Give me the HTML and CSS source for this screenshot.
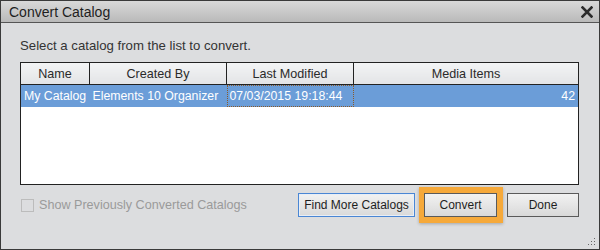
FILE: index.html
```html
<!DOCTYPE html>
<html lang="en">
<head>
    <meta charset="UTF-8">
    <title>Convert Catalog</title>
    <link rel="stylesheet" href="styles.css">
</head>
<body>
    <div class="window">
        <div class="title-bar">
            <span class="title">Convert Catalog</span>
            <span class="close-btn">
                <svg width="12" height="12" viewBox="0 0 12 12">
                    <path d="M1.5 1.5 L10.5 10.5 M10.5 1.5 L1.5 10.5" stroke="#2b2b2b" stroke-width="2.6" stroke-linecap="square"/>
                </svg>
            </span>
        </div>

        <div class="content">
            <p class="hint">Select a catalog from the list to convert.</p>

            <div class="catalog-list">
                <table>
                    <thead>
                        <tr>
                            <th class="col-name">Name</th>
                            <th class="col-created">Created By</th>
                            <th class="col-modified">Last Modified</th>
                            <th class="col-items">Media Items</th>
                        </tr>
                    </thead>
                    <tbody>
                        <tr class="selected">
                            <td>My Catalog</td>
                            <td>Elements 10 Organizer</td>
                            <td class="focused">07/03/2015 19:18:44</td>
                            <td class="num">42</td>
                        </tr>
                    </tbody>
                </table>
            </div>

            <div class="footer">
                <label class="check disabled">
                    <span class="check-box"></span>
                    Show Previously Converted Catalogs
                </label>
                <div class="buttons">
                    <button class="btn btn-focus">Find More Catalogs</button>
                    <span class="highlight"><button class="btn btn-convert">Convert</button></span>
                    <button class="btn btn-done">Done</button>
                </div>
            </div>
        </div>

        <span class="grip">
            <svg width="8" height="8" viewBox="0 0 8 8">
                <rect x="6" y="0" width="1" height="1" fill="#666"/>
                <rect x="3" y="3" width="1" height="1" fill="#666"/>
                <rect x="6" y="3" width="1" height="1" fill="#666"/>
                <rect x="0" y="6" width="1" height="1" fill="#666"/>
                <rect x="3" y="6" width="1" height="1" fill="#666"/>
                <rect x="6" y="6" width="1" height="1" fill="#666"/>
            </svg>
        </span>
    </div>
</body>
</html>
```

FILE: styles.css
```css
body {
    margin: 0;
    padding: 0;
    font-family: "Liberation Sans", Arial, sans-serif;
    font-size: 12.6px;
    color: #2a2a2a;
}

.window {
    position: relative;
    width: 600px;
    height: 250px;
    box-sizing: border-box;
    border: 1px solid #3a3a3a;
    background-color: #dcdddf;
    display: flex;
    flex-direction: column;
}

.title-bar {
    height: 21px;
    border-bottom: 1px solid #555;
    background: linear-gradient(#d9d9d9, #b9b9b9);
    display: flex;
    align-items: center;
    justify-content: space-between;
    padding: 0 6px 0 8px;
}

.title {
    font-size: 14px;
    color: #1e1e1e;
}

.close-btn {
    display: flex;
}

.content {
    padding: 16px 20px 0 19px;
    display: flex;
    flex-direction: column;
}

.hint {
    margin: 0 0 9px 0;
    font-size: 13.2px;
    line-height: 14px;
    color: #333;
}

.catalog-list {
    height: 121px;
    border: 1px solid #222;
    background-color: #fff;
}

table {
    width: 100%;
    border-collapse: collapse;
    table-layout: fixed;
}

th {
    height: 21px;
    padding: 0;
    font-weight: normal;
    color: #2a2a2a;
    background: linear-gradient(#f3f4f5, #e3e4e6);
    border-right: 1px solid #222;
    border-bottom: 1px solid #222;
}

th:last-child {
    border-right: none;
}

.col-name { width: 68px; }
.col-created { width: 136px; }
.col-modified { width: 126px; }

td {
    height: 22px;
    padding: 0 3px;
    font-size: 12.3px;
    white-space: nowrap;
    overflow: hidden;
    box-sizing: border-box;
}

.selected td {
    background-color: #6b9dd8;
    color: #fff;
}

td.focused {
    outline: 1px dotted #8a5a2a;
    outline-offset: -1px;
}

td.num {
    text-align: right;
}

.footer {
    display: flex;
    align-items: center;
    justify-content: space-between;
    margin-top: 2px;
}

.check {
    display: flex;
    align-items: center;
    gap: 5px;
    margin-left: 1px;
}

.check.disabled {
    color: #9a9a9a;
}

.check-box {
    width: 11px;
    height: 11px;
    border: 1px solid #bcbcbc;
    background-color: #dcdddf;
}

.buttons {
    display: flex;
    align-items: center;
    gap: 4px;
}

.btn {
    height: 24px;
    padding: 0;
    font-family: "Liberation Sans", Arial, sans-serif;
    font-size: 12px;
    color: #1e1e1e;
    border: 1px solid #5a5a5a;
    background: linear-gradient(#f2f2f2, #d9d9d9);
}

.btn-focus {
    width: 117px;
    border-color: #4a86d4;
    box-shadow: inset 0 0 0 1px #e8eef6;
}

.highlight {
    display: flex;
    padding: 6px 6px 6px 5px;
    background-color: #f6a93a;
    box-shadow: 0 1px 3px rgba(0, 0, 0, 0.25);
}

.btn-convert {
    width: 73px;
}

.btn-done {
    width: 72px;
}

.grip {
    position: absolute;
    right: 3px;
    bottom: 3px;
    display: flex;
}
```
